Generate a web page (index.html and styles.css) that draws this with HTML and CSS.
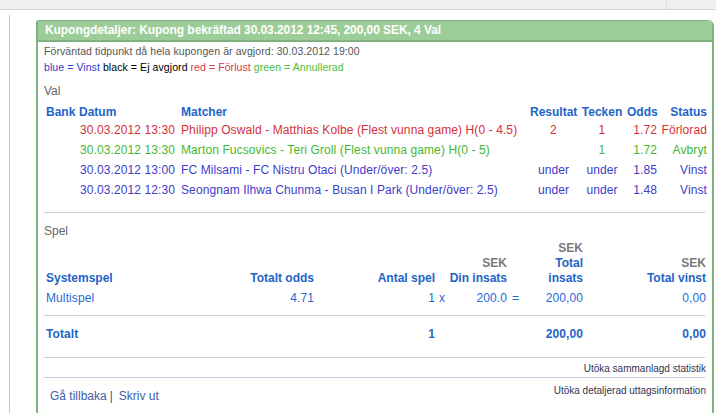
FILE: index.html
```html
<!DOCTYPE html>
<html lang="sv">
<head>
    <meta charset="UTF-8">
    <title>Kupongdetaljer</title>
    <link rel="stylesheet" href="styles.css">
</head>
<body>
    <div class="topbar">
        <div class="topbar-main"></div>
        <div class="topbar-side"></div>
    </div>

    <div class="page">
        <div class="coupon">
            <div class="coupon-head">Kupongdetaljer: Kupong bekräftad 30.03.2012 12:45, 200,00 SEK, 4 Val</div>
            <div class="coupon-body">
                <p class="note">Förväntad tidpunkt då hela kupongen är avgjord: 30.03.2012 19:00</p>
                <p class="note legend">
                    <span class="won">blue = Vinst</span>
                    <span class="open">black = Ej avgjord</span>
                    <span class="lost">red = Förlust</span>
                    <span class="void">green = Annullerad</span>
                </p>

                <h3 class="section">Val</h3>
                <table class="grid picks">
                    <colgroup>
                        <col style="width:33px"><col style="width:100px"><col style="width:351px">
                        <col style="width:51px"><col style="width:46px"><col style="width:34px"><col style="width:50px">
                    </colgroup>
                    <tr class="head">
                        <th class="left">Bank</th>
                        <th class="left">Datum</th>
                        <th class="left match">Matcher</th>
                        <th class="center">Resultat</th>
                        <th class="center">Tecken</th>
                        <th class="right">Odds</th>
                        <th class="right">Status</th>
                    </tr>
                    <tr class="lost">
                        <td></td>
                        <td class="right">30.03.2012 13:30</td>
                        <td class="match">Philipp Oswald - Matthias Kolbe (Flest vunna game) H(0 - 4.5)</td>
                        <td class="center">2</td>
                        <td class="center">1</td>
                        <td class="right">1.72</td>
                        <td class="right">Förlorad</td>
                    </tr>
                    <tr class="void">
                        <td></td>
                        <td class="right">30.03.2012 13:30</td>
                        <td class="match">Marton Fucsovics - Teri Groll (Flest vunna game) H(0 - 5)</td>
                        <td class="center"></td>
                        <td class="center">1</td>
                        <td class="right">1.72</td>
                        <td class="right">Avbryt</td>
                    </tr>
                    <tr class="won">
                        <td></td>
                        <td class="right">30.03.2012 13:00</td>
                        <td class="match">FC Milsami - FC Nistru Otaci (Under/över: 2.5)</td>
                        <td class="center">under</td>
                        <td class="center">under</td>
                        <td class="right">1.85</td>
                        <td class="right">Vinst</td>
                    </tr>
                    <tr class="won">
                        <td></td>
                        <td class="right">30.03.2012 12:30</td>
                        <td class="match">Seongnam Ilhwa Chunma - Busan I Park (Under/över: 2.5)</td>
                        <td class="center">under</td>
                        <td class="center">under</td>
                        <td class="right">1.48</td>
                        <td class="right">Vinst</td>
                    </tr>
                </table>

                <hr class="rule first">

                <h3 class="section spel">Spel</h3>
                <table class="grid bets">
                    <colgroup>
                        <col style="width:176px"><col style="width:96px"><col style="width:121px"><col style="width:10px">
                        <col style="width:62px"><col style="width:12px"><col style="width:64px"><col style="width:123px">
                    </colgroup>
                    <tr class="head">
                        <th class="left">Systemspel</th>
                        <th class="right">Totalt odds</th>
                        <th class="right">Antal spel</th>
                        <th></th>
                        <th class="right"><span class="cur">SEK</span><br>Din insats</th>
                        <th></th>
                        <th class="right"><span class="cur">SEK</span><br>Total<br>insats</th>
                        <th class="right"><span class="cur">SEK</span><br>Total vinst</th>
                    </tr>
                    <tr class="data">
                        <td>Multispel</td>
                        <td class="right">4.71</td>
                        <td class="right">1</td>
                        <td class="right">x</td>
                        <td class="right">200.0</td>
                        <td class="right">=</td>
                        <td class="right">200,00</td>
                        <td class="right">0,00</td>
                    </tr>
                </table>

                <hr class="rule">

                <table class="grid bets total">
                    <colgroup>
                        <col style="width:176px"><col style="width:96px"><col style="width:121px"><col style="width:10px">
                        <col style="width:62px"><col style="width:12px"><col style="width:64px"><col style="width:123px">
                    </colgroup>
                    <tr>
                        <td>Totalt</td>
                        <td></td>
                        <td class="right">1</td>
                        <td></td>
                        <td></td>
                        <td></td>
                        <td class="right">200,00</td>
                        <td class="right">0,00</td>
                    </tr>
                </table>

                <hr class="rule">
                <div class="expand">Utöka sammanlagd statistik</div>
                <hr class="rule">

                <div class="footer-row">
                    <div class="links">
                        <a href="#">Gå tillbaka</a><span class="sep">|</span><a href="#">Skriv ut</a>
                    </div>
                    <div class="expand lower">Utöka detaljerad uttagsinformation</div>
                </div>
            </div>
        </div>
    </div>
</body>
</html>
```

FILE: styles.css
```css
body {
    margin: 0;
    font-family: "Liberation Sans", Arial, sans-serif;
    font-size: 12px;
    color: #000;
    background: #fff;
}

.topbar {
    display: flex;
    height: 9px;
    background: #f0f0f0;
    border-bottom: 1px solid #d4d4d4;
}
.topbar-main {
    width: 666px;
    border-right: 1px solid #dcdcdc;
}
.topbar-side {
    flex: 1;
}

.page {
    margin-top: 5px;
    margin-left: 9px;
    padding: 5px 0 0 26px;
    border-left: 1px solid #aaccf0;
    height: 398px;
    box-sizing: border-box;
}

.coupon {
    width: 678px;
    box-sizing: border-box;
    border: 2px solid #80b280;
    border-radius: 3px 6px 6px 6px;
    height: 397px;
}
.coupon-head {
    background: #9ccc98;
    color: #fff;
    font-weight: bold;
    font-size: 12px;
    letter-spacing: -0.07px;
    height: 19px;
    line-height: 18px;
    padding-left: 7px;
    border-bottom: 2px solid #80b280;
    margin-top: -1px;
}
.coupon-body {
    padding: 1px 4px 0 6px;
}

.note {
    margin: 0;
    font-size: 10.5px;
    letter-spacing: 0.08px;
    line-height: 16px;
    color: #555;
}
.legend .won { color: #3838c8; }
.legend .open { color: #000; }
.legend .lost { color: #d83848; }
.legend .void { color: #48c040; }

.section {
    margin: 8px 0 0 0;
    font-size: 12px;
    font-weight: normal;
    color: #666;
    line-height: 16px;
}
.section.spel { margin-top: 10px; }

.grid {
    border-collapse: collapse;
    table-layout: fixed;
    width: 664px;
}
.grid th, .grid td {
    padding: 2px 2px;
    line-height: 16px;
    letter-spacing: 0.1px;
    white-space: nowrap;
    overflow: hidden;
}
.grid th {
    color: #1e64c8;
    font-weight: bold;
    vertical-align: bottom;
    letter-spacing: 0;
}
.left { text-align: left; }
.right { text-align: right; }
.center { text-align: center; }
.picks { margin-top: 4px; }
.picks .head th { padding-top: 1px; padding-bottom: 0; }
.picks .match { padding-left: 4px; }
.picks tr.lost { color: #d43038; }
.picks tr.void { color: #44b830; }
.picks tr.won { color: #3c3cc8; }

.bets { margin-top: 0; }
.bets .head th { line-height: 15px; padding-bottom: 1px; }
.bets .cur { color: #7a7a7a; }
.bets td { color: #1e6ad8; }
.bets .data td { padding-top: 3px; padding-bottom: 9px; }
.total { margin-top: 8px; }
.total td { font-weight: bold; color: #1e64c8; padding-bottom: 15px; }

.rule {
    border: 0;
    border-top: 1px solid #c8c8dc;
    margin: 0;
    width: 661px;
}
.rule.first { margin-top: 12px; }

.expand {
    text-align: right;
    font-size: 10px;
    color: #335;
    line-height: 16px;
    padding-top: 3px;
    padding-right: 2px;
}
.expand.lower { padding-top: 5px; }

.footer-row {
    display: flex;
    justify-content: space-between;
    align-items: flex-start;
}
.links {
    padding-left: 6px;
    padding-top: 10px;
    line-height: 16px;
    font-size: 12px;
}
.links a {
    color: #4060a8;
    text-decoration: none;
}
.sep {
    color: #704070;
    margin: 0 6px 0 3px;
}
```
